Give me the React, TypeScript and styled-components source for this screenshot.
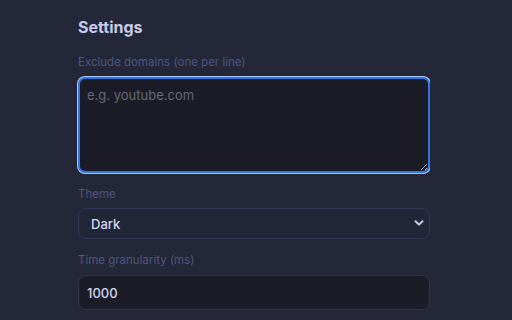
import React from 'react';
import styled, { createGlobalStyle } from 'styled-components';

const GlobalStyle = createGlobalStyle`
  html, body {
    margin: 0;
    padding: 0;
    background-color: #232738;
    font-family: 'Inter', 'Liberation Sans', sans-serif;
  }
`;

export default function App() {
  return (
    <>
      <GlobalStyle />
      <Page>
        <Title>Settings</Title>

        <Field>
          <Label>Exclude domains (one per line)</Label>
          <TextArea placeholder="e.g. youtube.com" />
        </Field>

        <Field>
          <Label>Theme</Label>
          <SelectWrap>
            <Select defaultValue="dark">
              <option value="dark">Dark</option>
              <option value="light">Light</option>
            </Select>
            <Chevron viewBox="0 0 12 12" aria-hidden>
              <path
                d="M2.5 4.2 L6 7.6 L9.5 4.2"
                fill="none"
                stroke="#c9cde6"
                strokeWidth="2"
                strokeLinecap="round"
                strokeLinejoin="round"
              />
            </Chevron>
          </SelectWrap>
        </Field>

        <Field>
          <Label>Time granularity (ms)</Label>
          <Input defaultValue="1000" />
        </Field>
      </Page>
    </>
  );
}

const Page = styled.div`
  display: flex;
  flex-direction: column;
  width: 352px;
  padding: 17px 0 0 78px;
  height: 303px;
  overflow: hidden;
`;

const Title = styled.h2`
  margin: 0 0 18px;
  font-size: 16px;
  line-height: 20px;
  font-weight: 700;
  color: #c6cbef;
`;

const Field = styled.div`
  display: flex;
  flex-direction: column;
  margin-bottom: 14px;
`;

const Label = styled.label`
  font-size: 11.5px;
  line-height: 14px;
  color: #4f5680;
  margin-bottom: 7px;
`;

const TextArea = styled.textarea`
  box-sizing: border-box;
  width: 100%;
  height: 96px;
  margin-top: 1px;
  padding: 7px 7px;
  background-color: #1b1c27;
  border: 2px solid #2d77e8;
  border-radius: 7px;
  box-shadow: 0 0 0 1px #aac6f2;
  color: #d0d4ef;
  font-family: 'Inter', 'Liberation Sans', sans-serif;
  font-size: 13px;
  line-height: 18px;
  resize: vertical;
  outline: none;

  &::placeholder {
    color: #65687a;
  }
`;

const SelectWrap = styled.div`
  position: relative;
`;

const Select = styled.select`
  box-sizing: border-box;
  width: 100%;
  height: 31px;
  padding: 0 12px;
  appearance: none;
  background-color: #222639;
  border: 1px solid #353a59;
  border-radius: 8px;
  color: #d2d6f2;
  font-family: 'Inter', 'Liberation Sans', sans-serif;
  font-size: 13px;
  font-weight: 500;
  outline: none;
`;

const Chevron = styled.svg`
  position: absolute;
  right: 5px;
  top: 9px;
  width: 12px;
  height: 12px;
  pointer-events: none;
`;

const Input = styled.input`
  box-sizing: border-box;
  width: 100%;
  height: 35px;
  margin-top: 1px;
  padding: 0 8px;
  background-color: #1b1c27;
  border: 1px solid #32364f;
  border-radius: 8px;
  color: #d2d6f2;
  font-family: 'Inter', 'Liberation Sans', sans-serif;
  font-size: 13px;
  font-weight: 500;
  outline: none;
`;
